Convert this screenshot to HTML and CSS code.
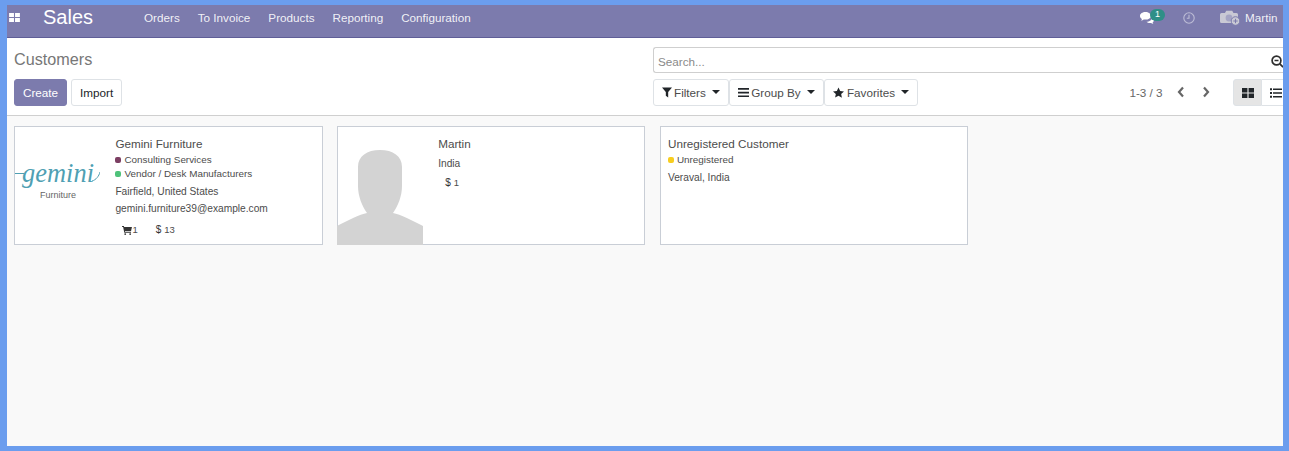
FILE: index.html
```html
<!DOCTYPE html>
<html lang="en">
<head>
    <meta charset="UTF-8">
    <title>Customers - Sales</title>
    <link rel="stylesheet" href="styles.css">
</head>
<body>
<div class="app">
    <header class="navbar">
        <svg class="apps-icon" viewBox="0 0 12 10"><path d="M0 0h5.400v4.400H0zM6.600 0H12v4.400H6.600zM0 5.600h5.400V10H0zM6.600 5.600H12V10H6.600z"/></svg>
        <span class="brand">Sales</span>
        <nav class="menu">
            <a>Orders</a>
            <a>To Invoice</a>
            <a>Products</a>
            <a>Reporting</a>
            <a>Configuration</a>
        </nav>
        <div class="systray">
            <span class="messages">
                <svg class="chat-icon" viewBox="0 0 14 12"><path d="M5.500 0C2.500 0 0 1.700 0 3.900c0 1.200.8 2.300 2 3-.2.600-.5 1.100-.9 1.500 1 0 2-.5 2.700-1 .5.100 1.100.2 1.700.2 3 0 5.500-1.700 5.500-3.700S8.500 0 5.500 0z"/><path d="M12.300 5c.1 3-3 4.700-5.800 4.800.8.900 2 1.300 3.300 1.300.4 0 .8 0 1.200-.1.600.4 1.400.9 2.400.9-.4-.4-.7-.9-.8-1.400.9-.6 1.400-1.500 1.400-2.400 0-1.100-.5-2-1.200-2.600z"/></svg>
                <span class="badge">1</span>
            </span>
            <svg class="clock-icon" viewBox="0 0 12 12"><circle cx="6" cy="6" r="5.200"/><path d="M6 2.800v3.500H3.800"/></svg>
            <svg class="camera-icon" viewBox="0 0 21 16"><path d="M1.500 3H5l1.200-2.200h6L13.500 3h3A1.500 1.500 0 0 1 18 4.500V13H1.500A1.500 1.500 0 0 1 0 11.500v-7A1.500 1.500 0 0 1 1.500 3z"/><circle cx="9" cy="8" r="3.400" class="lens"/><circle cx="15.500" cy="11" r="4.300" class="plus-disc"/><path d="M13.300 11h4.400M15.500 8.800v4.400" class="plus"/></svg>
            <span class="user">Martin</span>
        </div>
    </header>

    <section class="control-panel">
        <div class="cp-left">
            <h1 class="page-title">Customers</h1>
            <div class="cp-buttons">
                <button class="btn btn-primary">Create</button>
                <button class="btn">Import</button>
            </div>
        </div>
        <div class="cp-right">
            <div class="search-box">
                <span class="search-placeholder">Search...</span>
                <svg class="search-icon" viewBox="0 0 13 13"><circle cx="5.500" cy="5.500" r="4.400"/><path d="M3.500 5.500h4M8.800 8.800l3.300 3.300"/></svg>
            </div>
            <div class="cp-tools">
                <div class="filter-group">
                    <button class="btn btn-filter">
                        <svg class="tool-icon funnel-icon" viewBox="0 0 11 11"><path d="M0 0h11L6.800 5v6L4.200 9V5z"/></svg>
                        Filters<span class="caret"></span>
                    </button>
                    <button class="btn btn-filter">
                        <svg class="tool-icon" viewBox="0 0 11 11"><path d="M0 1h11v1.700H0zM0 4.700h11v1.700H0zM0 8.400h11v1.700H0z"/></svg>
                        Group By<span class="caret"></span>
                    </button>
                    <button class="btn btn-filter">
                        <svg class="tool-icon star-icon" viewBox="0 0 12 11"><path d="M6 0l1.800 3.800 4.200.5-3.100 2.800.8 4L6 9.100 2.300 11l.8-4L0 4.300l4.200-.5z"/></svg>
                        Favorites<span class="caret"></span>
                    </button>
                </div>
                <div class="pager">
                    <span class="pager-value">1-3 / 3</span>
                    <svg class="chevron" viewBox="0 0 8 12"><path d="M6 1.500L2 6l4 4.500"/></svg>
                    <svg class="chevron" viewBox="0 0 8 12"><path d="M2 1.500L6 6l-4 4.500"/></svg>
                </div>
                <div class="view-switch">
                    <button class="view-btn active">
                        <svg viewBox="0 0 12 10"><path d="M0 0h5.400v4.400H0zM6.600 0H12v4.400H6.600zM0 5.600h5.400V10H0zM6.600 5.600H12V10H6.600z"/></svg>
                    </button>
                    <button class="view-btn">
                        <svg viewBox="0 0 12 10"><path d="M0 .3h2v2H0zM3 .5h9v1.600H3zM0 4h2v2H0zM3 4.200h9v1.600H3zM0 7.700h2v2H0zM3 7.900h9v1.600H3z"/></svg>
                    </button>
                </div>
            </div>
        </div>
    </section>

    <main class="kanban">
        <article class="card">
            <div class="card-image">
                <svg class="logo" viewBox="0 0 86 118">
                    <path class="logo-line" d="M1 46.500h9"/>
                    <path class="logo-line" d="M78 54c4-1 7-5 8-9"/>
                    <text class="logo-word" x="8" y="55" textLength="72" lengthAdjust="spacingAndGlyphs">gemini</text>
                    <text class="logo-sub" x="26" y="71">Furniture</text>
                </svg>
            </div>
            <div class="card-body">
                <div class="card-name">Gemini Furniture</div>
                <ul class="tags">
                    <li><span class="dot dot-purple"></span>Consulting Services</li>
                    <li><span class="dot dot-green"></span>Vendor / Desk Manufacturers</li>
                </ul>
                <div class="card-line">Fairfield, United States</div>
                <div class="card-line">gemini.furniture39@example.com</div>
                <div class="card-stats">
                    <span class="stat">
                        <svg class="cart-icon" viewBox="0 0 11 10"><path d="M0 0h2l.4 1H11l-1 4.500H3.200l.2 1H10v1H2.500L1.200 1H0z"/><circle cx="3.500" cy="9" r="1"/><circle cx="9" cy="9" r="1"/></svg>1
                    </span>
                    <span class="stat"><b class="dollar">$</b>13</span>
                </div>
            </div>
        </article>

        <article class="card">
            <div class="card-image">
                <svg class="avatar" viewBox="0 0 86 118">
                    <path d="M21 40c0-11 9-17 22-17s22 6 22 17v19c0 10-4 20-9 27 7 1 20 8 30 13v19H0V99c10-5 23-12 30-13-5-7-9-17-9-27z"/>
                </svg>
            </div>
            <div class="card-body">
                <div class="card-name">Martin</div>
                <div class="card-line card-line-first">India</div>
                <div class="card-stats card-stats-tight">
                    <span class="stat"><b class="dollar">$</b>1</span>
                </div>
            </div>
        </article>

        <article class="card">
            <div class="card-body card-body-full">
                <div class="card-name">Unregistered Customer</div>
                <ul class="tags">
                    <li><span class="dot dot-yellow"></span>Unregistered</li>
                </ul>
                <div class="card-line">Veraval, India</div>
            </div>
        </article>
    </main>
</div>
</body>
</html>
```

FILE: styles.css
```css
html, body {
    height: 100%;
}
body {
    margin: 0;
    padding: 5px 6px 5px 7px;
    box-sizing: border-box;
    background-color: #6b9dee;
    font-family: "Liberation Sans", Arial, sans-serif;
    font-size: 11.700px;
    color: #4c4c4c;
    overflow: hidden;
}
.app {
    height: 100%;
    display: flex;
    flex-direction: column;
    overflow: hidden;
    background-color: #f9f9f9;
}
button {
    font-family: inherit;
}

/* top bar */
.navbar {
    flex: none;
    height: 32px;
    display: flex;
    align-items: flex-start;
    background-color: #7c7bad;
    border-bottom: 1px solid #5f5e97;
    color: #fff;
}
.apps-icon {
    width: 11px;
    height: 9px;
    margin: 8px 0 0 2px;
    fill: #fff;
}
.brand {
    margin: 0 0 0 23px;
    font-size: 20px;
    line-height: 24px;
    width: 101px;
}
.menu {
    display: flex;
    gap: 18px;
    font-size: 11.700px;
    line-height: 26px;
    color: rgba(255, 255, 255, 0.9);
}
.systray {
    margin-left: auto;
    display: flex;
    align-items: flex-start;
    padding-right: 5.500px;
}
.messages {
    position: relative;
    width: 14px;
    margin-right: 29px;
}
.chat-icon {
    display: block;
    width: 14px;
    height: 12px;
    margin-top: 7px;
    fill: #fff;
}
.badge {
    position: absolute;
    left: 10px;
    top: 4px;
    width: 15px;
    height: 12px;
    border-radius: 6px;
    background-color: #2f8f87;
    font-size: 9px;
    line-height: 11px;
    text-align: center;
}
.clock-icon {
    width: 12px;
    height: 12px;
    margin: 7px 25px 0 0;
    fill: none;
    stroke: #bdbdd6;
    stroke-width: 1.100;
}
.camera-icon {
    width: 21px;
    height: 16px;
    margin: 5px 4px 0 0;
    fill: #c9c9d4;
}
.camera-icon .lens {
    fill: #a5a5c4;
}
.camera-icon .plus-disc {
    fill: #c9c9d4;
    stroke: #7c7bad;
    stroke-width: 1;
}
.camera-icon .plus {
    fill: none;
    stroke: #7c7bad;
    stroke-width: 1;
}
.user {
    line-height: 26px;
    color: rgba(255, 255, 255, 0.9);
}

/* control panel */
.control-panel {
    flex: none;
    height: 78px;
    display: flex;
    background-color: #fff;
    border-bottom: 1px solid #cfcfcf;
    box-sizing: border-box;
}
.cp-left {
    flex: none;
    width: 639px;
    padding-left: 7px;
}
.page-title {
    margin: 11px 0 0;
    font-size: 16.200px;
    font-weight: 400;
    line-height: 21px;
    color: #777;
}
.cp-buttons {
    display: flex;
    gap: 4px;
    margin-top: 9px;
}
.btn {
    height: 27px;
    padding: 0 8px;
    border: 1px solid #dee2e6;
    border-radius: 3px;
    background-color: #fff;
    font-size: 11.700px;
    color: #212529;
    white-space: nowrap;
}
.cp-buttons .btn-primary {
    background-color: #7c7bad;
    border-color: #7c7bad;
    color: #fff;
}
.cp-right {
    flex: none;
    width: 640px;
    padding-top: 9px;
}
.search-box {
    height: 26px;
    box-sizing: border-box;
    display: flex;
    align-items: center;
    justify-content: space-between;
    width: 631px;
    padding: 2px 0 0 4px;
    border: 1px solid #cfcfcf;
    border-right: 0;
    border-radius: 3px 0 0 3px;
    font-size: 11.700px;
    color: #8a8a8a;
}
.search-icon {
    width: 13px;
    height: 13px;
    flex: none;
    fill: none;
    stroke: #2e2e2e;
    stroke-width: 1.700;
}
.cp-tools {
    display: flex;
    align-items: flex-start;
    margin-top: 6px;
}
.filter-group {
    display: flex;
}
.btn-filter {
    display: flex;
    align-items: center;
    color: #4c4c4c;
}
.tool-icon {
    width: 11px;
    height: 11px;
    margin-right: 2px;
    fill: #212529;
}
.funnel-icon {
    width: 10px;
}
.star-icon {
    margin-right: 3px;
}
.caret {
    width: 0;
    height: 0;
    margin: -2px 0 0 6.400px;
    border-top: 4px solid #212529;
    border-left: 4px solid transparent;
    border-right: 4px solid transparent;
}
.pager {
    display: flex;
    align-items: center;
    height: 27px;
    margin-left: 211px;
}
.pager-value {
    width: 48px;
    color: #666;
}
.chevron {
    width: 8px;
    height: 12px;
    margin-top: -2px;
    fill: none;
    stroke: #666;
    stroke-width: 2.200;
}
.chevron + .chevron {
    margin-left: 16.500px;
}
.view-switch {
    display: flex;
    margin-left: 23.500px;
    flex: none;
}
.view-btn {
    width: 29px;
    height: 27px;
    padding: 0;
    display: flex;
    align-items: center;
    justify-content: center;
    border: 1px solid #dee2e6;
    border-radius: 3px 0 0 3px;
    background-color: #fff;
}
.view-btn.active {
    background-color: #e5e5e5;
}
.view-btn + .view-btn {
    border-radius: 0;
    border-left: 0;
}
.view-btn svg {
    width: 12px;
    height: 10px;
    fill: #212529;
}

/* cards */
.kanban {
    flex: 1;
    display: grid;
    grid-template-columns: repeat(3, 308.200px);
    grid-auto-rows: 119px;
    column-gap: 14.600px;
    padding: 10px 0 0 7.400px;
}
.card {
    display: flex;
    box-sizing: border-box;
    background-color: #fff;
    border: 1px solid #c9ced6;
}
.card-image {
    flex: none;
    width: 86px;
    margin: 0 0 -1px -1px;
}
.logo {
    display: block;
    width: 86px;
    height: 118px;
}
.logo-line {
    fill: none;
    stroke: #4f9fb3;
    stroke-width: 1;
}
.logo-word {
    font-family: "Liberation Serif", serif;
    font-style: italic;
    font-size: 27px;
    fill: #4f9fb3;
}
.logo-sub {
    font-size: 9px;
    fill: #666;
}
.avatar {
    display: block;
    width: 86px;
    height: 118px;
    fill: #d3d3d3;
}
.card-body {
    padding: 8px 0 0 15px;
    min-width: 0;
}
.card-body-full {
    padding-left: 7px;
}
.card-name {
    line-height: 17px;
}
.tags {
    list-style: none;
    margin: 1px 0 0;
    padding: 0;
    font-size: 9.900px;
    line-height: 14px;
}
.tags li {
    display: flex;
    align-items: center;
}
.dot {
    width: 6px;
    height: 6px;
    margin-right: 3px;
    border-radius: 2px;
    flex: none;
}
.dot-purple {
    background-color: #7c3f63;
}
.dot-green {
    background-color: #4fc27a;
}
.dot-yellow {
    background-color: #f7cd1f;
}
.card-line {
    margin-top: 3px;
    font-size: 10.200px;
    line-height: 14px;
}
.tags + .card-line {
    margin-top: 4px;
}
.card-line-first {
    margin-top: 5px;
}
.card-stats {
    display: flex;
    gap: 18px;
    margin-top: 7px;
    padding-left: 7px;
    font-size: 9.500px;
    line-height: 14px;
}
.card-stats-tight {
    margin-top: 5px;
}
.stat {
    display: flex;
    align-items: center;
}
.cart-icon {
    width: 10px;
    height: 9px;
    fill: #333;
}
.dollar {
    font-size: 10px;
    font-weight: 500;
    margin-right: 3px;
    color: #333;
}
```
